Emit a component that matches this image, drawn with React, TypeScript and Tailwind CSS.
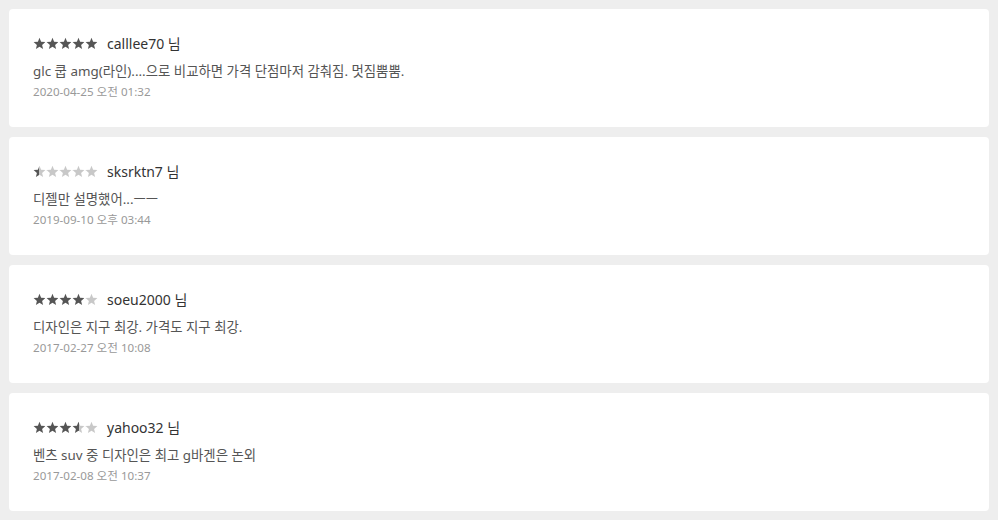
const reviews = [
  { rating: 5, user: "calllee70", text: "glc 쿱 amg(라인)....으로 비교하면 가격 단점마저 감춰짐. 멋짐뿜뿜.", date: "2020-04-25 오전 01:32" },
  { rating: 0.5, user: "sksrktn7", text: "디젤만 설명했어...ㅡㅡ", date: "2019-09-10 오후 03:44" },
  { rating: 4, user: "soeu2000", text: "디자인은 지구 최강. 가격도 지구 최강.", date: "2017-02-27 오전 10:08" },
  { rating: 3.5, user: "yahoo32", text: "벤츠 suv 중 디자인은 최고 g바겐은 논외", date: "2017-02-08 오전 10:37" },
];

const STAR = "6.5,0.8 8.1,4.8 12.4,5.1 9.1,7.9 10.1,12.1 6.5,9.8 2.9,12.1 3.9,7.9 0.6,5.1 4.9,4.8";

const Star = ({ fill, id }: { fill: number; id: string }) => (
  <svg width="13" height="13" viewBox="0 0 13 13" className="block">
    <defs>
      <linearGradient id={id} x1="0" x2="1" y1="0" y2="0">
        <stop offset={fill} stopColor="#555" />
        <stop offset={fill} stopColor="#c8c8c8" />
      </linearGradient>
    </defs>
    <polygon points={STAR} fill={`url(#${id})`} />
  </svg>
);

const Stars = ({ rating, name }: { rating: number; name: string }) => (
  <div className="flex">
    {[0, 1, 2, 3, 4].map((i) => (
      <Star key={i} id={`${name}-${i}`} fill={Math.max(0, Math.min(1, rating - i))} />
    ))}
  </div>
);

export default function App() {
  return (
    <div
      className="min-h-[520px] bg-[#eeeeee] p-[9px] flex flex-col gap-[10px]"
      style={{ fontFamily: '"Noto Sans", "Noto Sans CJK KR", sans-serif' }}
    >
      {reviews.map((r) => (
        <div key={r.user} className="bg-white rounded-[4px] h-[118px] px-6 pt-6">
          <div className="flex items-center h-5 gap-[9px]">
            <Stars rating={r.rating} name={r.user} />
            <span className="text-[14px] text-[#333]">{r.user} 님</span>
          </div>
          <p className="mt-2 text-[13.4px] leading-5 text-[#555]">{r.text}</p>
          <p className="mt-[2px] text-[11.6px] leading-[18px] text-[#999]">{r.date}</p>
        </div>
      ))}
    </div>
  );
}
